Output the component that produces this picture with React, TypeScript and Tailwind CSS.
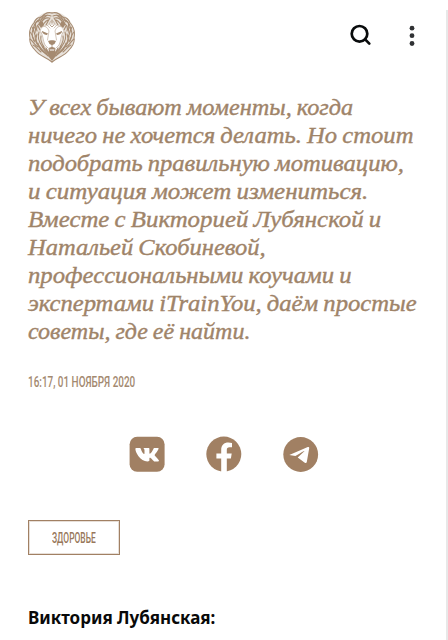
import React, { useLayoutEffect, useRef, useState } from "react";

const lead: [string, number][] = [
  ["У всех бывают моменты, когда", 325],
  ["ничего не хочется делать. Но стоит", 385],
  ["подобрать правильную мотивацию,", 376],
  ["и ситуация может измениться.", 340],
  ["Вместе с Викторией Лубянской и", 353],
  ["Натальей Скобиневой,", 238],
  ["профессиональными коучами и", 324],
  ["экспертами iTrainYou, даём простые", 389],
  ["советы, где её найти.", 222],
];

/* Sets one line of text to a given measure by scaling the glyphs horizontally. */
function FitLine({ text, width }: { text: string; width: number }) {
  const ref = useRef<HTMLSpanElement>(null);
  const [natural, setNatural] = useState(0);
  useLayoutEffect(() => {
    if (ref.current) setNatural(ref.current.offsetWidth);
  }, []);
  const style: React.CSSProperties = natural ? { transform: `scaleX(${width / natural})` } : {};
  return (
    <span ref={ref} className="inline-block origin-left whitespace-nowrap" style={style}>
      {text}
    </span>
  );
}

const half = [
  "M0 2C-4 1-8 3-10 6C-14 6-17 9-18 12C-22 16-23 22-22 27C-23 32-20 36-17 39C-13 45-6 46 0 51",
  "M-1 5C-6 3-10 6-11 9C-16 9-17 13-17 16C-21 20-20 26-18 30",
  "M-3 7C-8 6-10 10-11 12C-15 13-16 17-15 20",
  "M-22 21C-19 24-19 28-17 31M-22 28C-19 30-18 34-14 36M-20 16C-18 19-18 23-16 26",
  "M-19 34C-16 35-14 39-11 41M-15 23C-17 28-15 33-12 36C-10 40-6 42-4 45",
  "M-13 21C-15 27-13 31-10 35C-9 38-6 41-2 44M-11 25C-12 29-10 33-8 36",
  "M-17 25C-17 32-13 37-9 40M-14 32C-13 37-8 41-5 43M-12 38C-9 42-4 43 0 48",
  "M-7 4C-11 5-13 8-14 11M-12 8C-16 10-18 14-19 18M-5 4C-7 7-11 7-12 11",
  "M-4 9C-7 10-8 13-10 15M-2 7C-4 10-5 12-6 14M-17 13C-15 15-17 19-17 22",
  "M-9 35C-8 39-4 40-2 44M-6 37L-4 41M-3 38L-1 43M-14 15L-12 19",
];

function Lion() {
  return (
    <svg viewBox="-24 0 48 53" className="h-[53px] w-12" fill="none" stroke="#a58a70" strokeWidth="1.05" strokeLinecap="round">
      <path
        fill="#a58a70"
        fillOpacity=".25"
        stroke="none"
        fillRule="evenodd"
        d="M0 1C-9 0-17 7-20 13C-24 20-23 31-18 38C-13 44-6 46 0 51C6 46 13 44 18 38C23 31 24 20 20 13C17 7 9 0 0 1ZM0 14C5 14 11 16 11 20C10 28 8 34 5 38Q0 41-5 38C-8 34-10 28-11 20C-11 16-5 14 0 14Z"
      />
      {[1, -1].map((side) => (
        <g key={side} transform={`scale(${side} 1)`}>
          {half.map((d) => (
            <path key={d} d={d} />
          ))}
          <path fill="#a58a70" stroke="none" d="M-10 20L-4 22.5L-5 24C-7 24-9 23-10 21ZM-13 14C-14 11-11 9-9 11L-8 14L-11 17Z" />
          <path strokeWidth=".6" strokeOpacity=".8" d="M-9 15C-6 15-4 17-3 20L-4.5 29M-11 21C-9 24-9 30-7 34L-4 37M-5 14L-2 17M-1 10L-3 13" />
        </g>
      ))}
      <path fill="#a58a70" stroke="none" d="M-4 30C-2 29 2 29 4 30L2.5 33L.4 34V36L3.5 37L2 38.5H-2L-3.5 37L-.4 36V34L-2.5 33Z" />
      <path fill="#a58a70" stroke="none" d="M-5 41Q0 38 5 41L3 46L0 50L-3 46Z" />
      <path strokeWidth=".8" d="M0 9V12M-2 14L0 16L2 14" />
    </svg>
  );
}

export default function App() {
  return (
    <div className="flex h-[640px] w-[448px] overflow-hidden bg-white">
      <main className="flex w-[446px] shrink-0 flex-col px-7">
        <header className="flex h-[93px] items-start justify-between pt-[11px]">
          <Lion />
          <div className="flex">
            <svg viewBox="0 0 22 22" className="mt-[13px] size-[22px]" fill="none" stroke="#090b0c" strokeWidth="2.7" strokeLinecap="round">
              <circle cx="9.5" cy="9.8" r="7.8" />
              <path d="M15.4 15.6L19.3 19.6" />
            </svg>
            <svg viewBox="0 0 8 24" className="mt-[13px] mr-[2px] ml-[36px] h-6 w-2" fill="#303234">
              <circle cx="4" cy="4.2" r="2.4" />
              <circle cx="4" cy="11.7" r="2.4" />
              <circle cx="4" cy="19.5" r="2.4" />
            </svg>
          </div>
        </header>
        <h2 className="font-['Liberation_Serif',serif] text-[24px] leading-7 text-[#9f8469] italic [word-spacing:-1px] [-webkit-text-stroke:0.4px_#9f8469]">
          {lead.map(([text, width]) => (
            <div key={text} className="h-7">
              <FitLine text={text} width={width} />
            </div>
          ))}
        </h2>
        <time className="mt-[27px] block h-5 font-['Roboto',sans-serif] text-[14px] leading-5 font-medium text-[#a38970]">
          <FitLine text="16:17, 01 НОЯБРЯ 2020" width={107} />
        </time>
        <div className="mt-[44px] ml-[101px] flex h-9 gap-[41px]">
          <svg viewBox="0 0 36 36" className="size-9" fill="none">
            <rect x=".6" y=".7" width="35" height="35" rx="7.5" fill="#a18063" />
            <path fill="#fff" d="M7.6 12h3.1c.8 0 1 .4 1.2 1.1c.8 2.7 2.3 5 3.1 5c.4 0 .5-.3.5-1.1v-2.8c-.1-1.4-.9-1.3-.9-1.9c0-.2.2-.3.6-.3h4.4c.6 0 .8.3.8 1v4c0 .5.2.7.4.7c.3 0 .6-.2 1.1-.7c1.2-1.3 2.1-3.3 2.5-4.1c.2-.5.5-.9 1.3-.9h3c.9 0 1 .5.8 1.1c-.7 1.8-3.1 4.8-3.6 5.4c-.4.5-.4.7 0 1.2c1 1.1 3.3 3.2 3.9 4.5c.4.8 0 1.2-.8 1.2h-3.1c-1.1 0-1.4-.6-2.3-1.5c-1.5-1.6-2.2-2.1-2.7-2.1c-.4 0-.5.2-.5 1v1.5c0 .7-.2 1.1-2.1 1.1c-3.1 0-6.6-2-9-5.4c-2-2.9-2.9-5.7-2.9-7c0-.6.3-1 1.2-1z" />
          </svg>
          <svg viewBox="0 0 36 36" className="size-9" fill="none">
            <circle cx="17.8" cy="18.1" r="17.5" fill="#a18063" />
            <path fill="#fff" d="M15.2 36V22.6H10.4V17.6h4.8v-3.4c0-5 2.8-7.6 7.2-7.6l3.6.3v4.4h-2.4c-2.1 0-2.8 1.1-2.8 2.6v3.7h4.9l-.8 5h-4.1V36z" />
          </svg>
          <svg viewBox="0 0 36 36" className="size-9" fill="none">
            <circle cx="17.7" cy="18.5" r="17.4" fill="#a18063" />
            <path fill="#fff" d="M6.3 18.9L24.8 11.1Q26.4 10.6 26.2 12.2L23.8 25.9Q23.4 27.7 21.8 26.7L14.7 21.5L21.6 14.9Q20.8 14.6 12.4 20.1Z" />
          </svg>
        </div>
        <div className="mt-[48px] flex h-[35px] w-[92px] shrink-0 items-center border border-[#a18063] pl-[23px] font-['Roboto',sans-serif] text-[14px] leading-5 font-medium text-[#98775a] ring-1 ring-[#a18063]/25 ring-inset">
          <FitLine text="ЗДОРОВЬЕ" width={44} />
        </div>
        <p className="mt-[51px] h-6 font-['Noto_Sans',sans-serif] text-[17px] leading-6 font-bold text-[#090909]">
          <FitLine text="Виктория Лубянская:" width={187} />
        </p>
      </main>
      <div className="mt-2.5 w-[2px] bg-[#e8e8e8]" />
    </div>
  );
}
